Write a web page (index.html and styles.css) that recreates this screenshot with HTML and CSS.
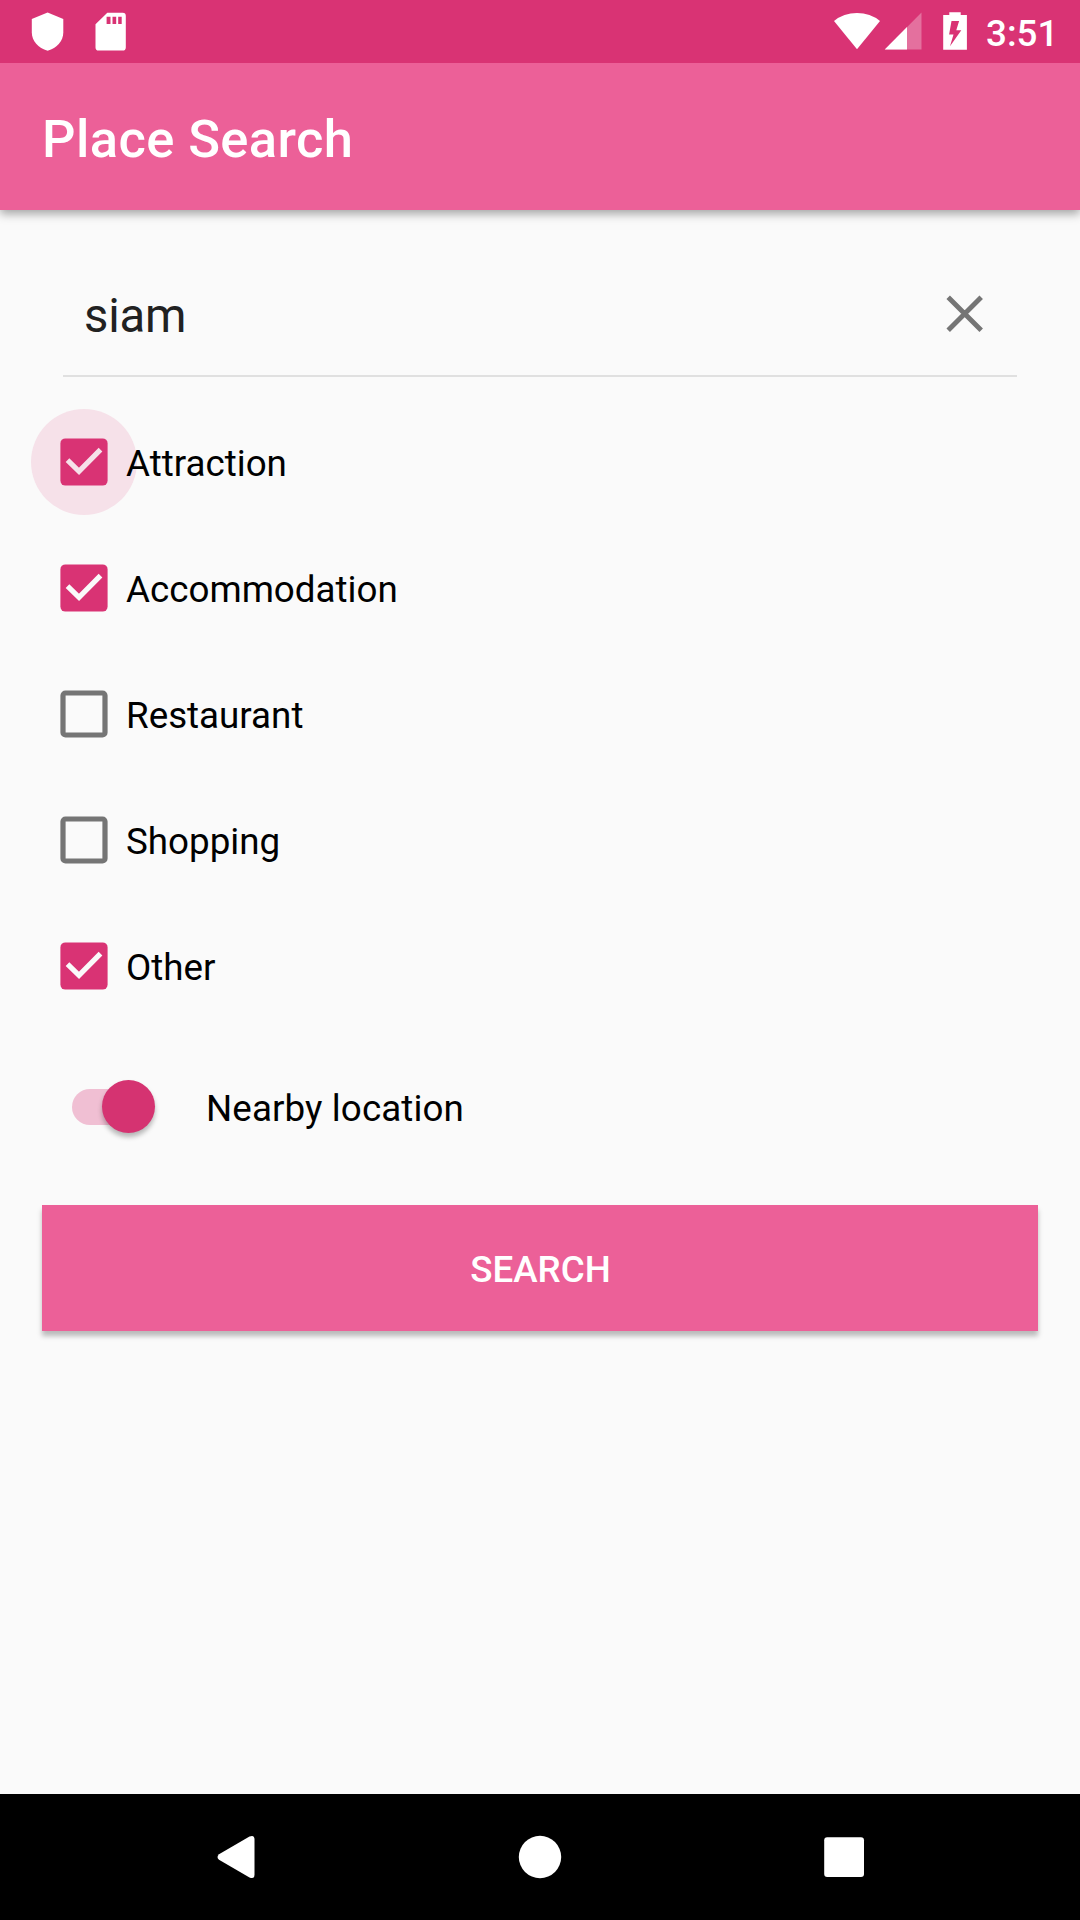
FILE: index.html
```html
<!DOCTYPE html>
<html lang="en">
<head>
<meta charset="utf-8">
<title>Place Search</title>
<link rel="stylesheet" href="styles.css">
</head>
<body>
<div class="screen">
  <header class="status-bar">
    <svg class="status-left" width="140" height="63" viewBox="0 0 140 63" fill="#fff">
      <path d="M47.6 12.5 63.3 19v13.5c0 8.300-6.300 15.700-15.700 18.200C38.200 48.200 31.800 40.800 31.800 32.500V19z"/>
      <path fill-rule="evenodd" d="M107.300 12.700h15.400a3.100 3.100 0 0 1 3.100 3.100v31.600a3.100 3.100 0 0 1-3.100 3.100H98.600a3.100 3.100 0 0 1-3.100-3.100V24.200zM106.600 16.700v7.400h3.900v-7.400zM112.500 16.700v7.400h3.700v-7.400zM118.200 16.700v7.400h3.500v-7.400z"/>
    </svg>
    <div class="status-right">
      <svg width="140" height="63" viewBox="830 0 140 63" fill="#fff">
        <path d="M857 49.300 834 20.900Q843.600 12.900 857 12.900T880 20.900z"/>
        <path opacity=".3" d="M921.500 12.500v37H885z"/>
        <path d="M907 27v22.500h-22.300z"/>
        <path fill-rule="evenodd" d="M949.300 12.200h11.400V15h6.200v34.800H943.200V15h6.100zM951.500 21l-2.400 13.500h4.400l-3.500 11.700 11.300-16h-5l2.800-9.200z"/>
      </svg>
      <span class="clock">3:51</span>
    </div>
  </header>

  <div class="toolbar"><h1 class="title">Place Search</h1></div>

  <main class="content">
    <div class="search-field">
      <span class="query">siam</span>
      <svg class="clear" width="38" height="38" viewBox="0 0 38 38"><path d="M2.200 2.200l33 33M35.200 2.200l-33 33"/></svg>
    </div>

    <div class="option">
      <svg class="checkbox checked pressed" width="48" height="48" viewBox="0 0 48 48"><circle cx="24" cy="24" r="53"/><rect x=".4" y=".4" width="47.200" height="47.200" rx="5"/><path d="M7.500 22.200l11.500 11.200L40.500 11.600"/></svg>
      <span class="label">Attraction</span>
    </div>
    <div class="option">
      <svg class="checkbox checked" width="48" height="48" viewBox="0 0 48 48"><rect x=".4" y=".4" width="47.200" height="47.200" rx="5"/><path d="M7.500 22.200l11.500 11.200L40.500 11.600"/></svg>
      <span class="label">Accommodation</span>
    </div>
    <div class="option">
      <svg class="checkbox" width="48" height="48" viewBox="0 0 48 48"><rect x="3" y="3" width="42" height="42" rx="2.500"/></svg>
      <span class="label">Restaurant</span>
    </div>
    <div class="option">
      <svg class="checkbox" width="48" height="48" viewBox="0 0 48 48"><rect x="3" y="3" width="42" height="42" rx="2.500"/></svg>
      <span class="label">Shopping</span>
    </div>
    <div class="option">
      <svg class="checkbox checked" width="48" height="48" viewBox="0 0 48 48"><rect x=".4" y=".4" width="47.200" height="47.200" rx="5"/><path d="M7.500 22.200l11.500 11.200L40.500 11.600"/></svg>
      <span class="label">Other</span>
    </div>

    <div class="nearby">
      <span class="switch"><span class="thumb"></span></span>
      <span class="label">Nearby location</span>
    </div>

    <button class="search-button">SEARCH</button>
  </main>

  <nav class="nav-bar">
    <svg width="1080" height="126" viewBox="0 0 1080 126" fill="#fff">
      <path d="M219 60.200 249.500 42.600Q254.500 40.500 254.500 45.500V80.500Q254.500 85.500 249.500 83.400L219 65.800Q216 63 219 60.200z"/>
      <circle cx="540" cy="63" r="21.200"/>
      <rect x="824.200" y="43.200" width="39.800" height="39.800" rx="3"/>
    </svg>
  </nav>
</div>
</body>
</html>
```
FILE: styles.css
```css
* { box-sizing: border-box; }

body {
  margin: 0;
  font-family: Roboto, sans-serif;
  font-size: 36.75px;
  color: #000;
  background: #fafafa;
}

svg { display: block; flex: none; }

.screen {
  width: 1080px;
  height: 1920px;
  display: flex;
  flex-direction: column;
  overflow: hidden;
}

.status-bar {
  height: 63px;
  flex: none;
  display: flex;
  justify-content: space-between;
  background: #d93374;
  z-index: 2;
}

.status-right { display: flex; width: 250px; }

.clock {
  padding: 4px 0 0 16px;
  line-height: 60px;
  font-weight: 500;
  color: #fff;
}

.toolbar {
  height: 147px;
  flex: none;
  display: flex;
  align-items: center;
  padding: 5px 42px 0;
  background: #ec6098;
  box-shadow: 0 4px 9px rgba(0, 0, 0, .34);
  z-index: 1;
}

.title {
  margin: 0;
  font-size: 52.5px;
  font-weight: 500;
  letter-spacing: .4px;
  color: #fff;
}

.content {
  flex: 1;
  display: flex;
  flex-direction: column;
}

.search-field {
  height: 167px;
  margin: 0 63px 22px;
  padding: 42px 33px 0 21px;
  display: flex;
  align-items: center;
  justify-content: space-between;
  border-bottom: 2px solid #e0e0e0;
}

.query {
  padding-top: 5px;
  font-size: 47.25px;
  letter-spacing: -.2px;
  color: #212121;
}

.clear {
  stroke: #757575;
  stroke-width: 4.9;
}

.option {
  height: 126px;
  padding-left: 60px;
  display: flex;
  align-items: center;
  gap: 18px;
}

.label { padding-top: 3px; z-index: 1; }

.checkbox { overflow: visible; }

.checkbox rect {
  fill: none;
  stroke: #757575;
  stroke-width: 5.2;
}

.checkbox path {
  fill: none;
  stroke: #fafafa;
  stroke-width: 5.2;
}

.checkbox.checked rect {
  fill: #d93374;
  stroke: none;
}

.checkbox circle { fill: #f6e1e9; }

.checkbox.pressed path { stroke: #f6e1e9; }

.nearby {
  height: 154px;
  padding: 1px 0 0 72px;
  display: flex;
  align-items: center;
  gap: 51px;
  letter-spacing: .1px;
}

.switch {
  width: 83px;
  height: 36px;
  display: flex;
  align-items: center;
  justify-content: flex-end;
  border-radius: 18px;
  background: linear-gradient(90deg, #f0bfd3 65px, transparent 65px);
}

.thumb {
  width: 53px;
  height: 53px;
  flex: none;
  border-radius: 50%;
  background: #d53371;
  box-shadow: 0 4px 5px rgba(0, 0, 0, .28);
}

.search-button {
  width: 996px;
  height: 126px;
  margin: 22px 42px 0;
  padding: 3px 0 0 1px;
  border: 0;
  font: 500 36.75px Roboto, sans-serif;
  color: #fff;
  background: #ec6098;
  box-shadow: 0 5px 5px rgba(0, 0, 0, .26);
}

.nav-bar { height: 126px; flex: none; background: #000; }
```
